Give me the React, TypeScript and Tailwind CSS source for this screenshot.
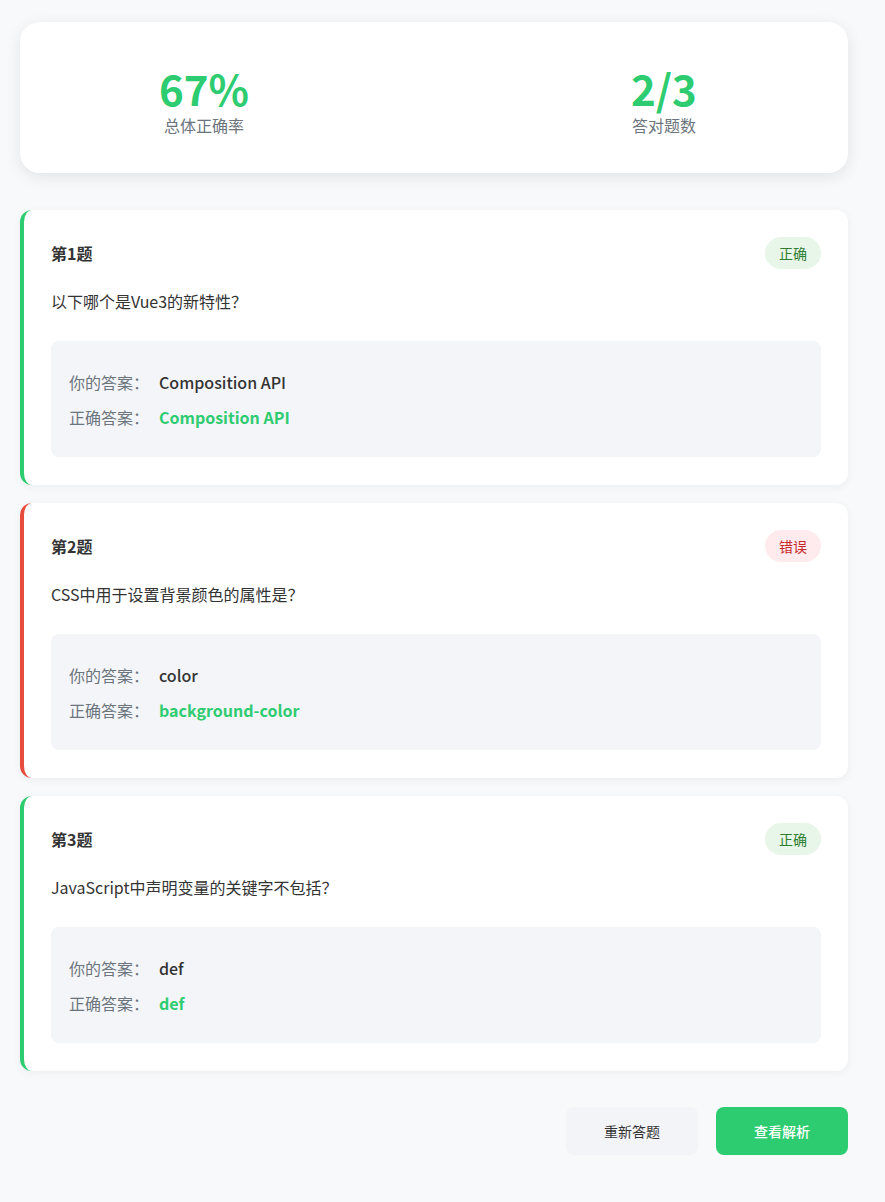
import React from "react"

type Question = {
  id: number
  text: string
  yourAnswer: string
  correctAnswer: string
  isCorrect: boolean
}

const questions: Question[] = [
  { id: 1, text: "以下哪个是Vue3的新特性？", yourAnswer: "Composition API", correctAnswer: "Composition API", isCorrect: true },
  { id: 2, text: "CSS中用于设置背景颜色的属性是？", yourAnswer: "color", correctAnswer: "background-color", isCorrect: false },
  { id: 3, text: "JavaScript中声明变量的关键字不包括？", yourAnswer: "def", correctAnswer: "def", isCorrect: true },
]

const QuestionCard = ({ q }: { q: Question }) => {
  return (
    <div
      className={
        "rounded-xl bg-white border-l-4 pt-[27px] pb-[28px] pl-[27px] pr-[27px] shadow-[0_2px_10px_rgba(0,0,0,0.05)] " +
        (q.isCorrect ? "border-[#2ecc71]" : "border-[#e74c3c]")
      }
    >
      <div className="flex items-center justify-between">
        <span className="text-base font-bold text-[#333]">第{q.id}题</span>
        {q.isCorrect ? (
          <span className="h-8 px-[14px] flex items-center rounded-full bg-[#e8f5e9] text-sm text-[#2e7d32]">正确</span>
        ) : (
          <span className="h-8 px-[14px] flex items-center rounded-full bg-[#ffebee] text-sm text-[#c62828]">错误</span>
        )}
      </div>
      <p className="mt-5 text-base leading-6 text-[#333]">{q.text}</p>
      <div className="mt-7 rounded-lg bg-[#f4f5f9] px-[18px] pt-[29px] pb-[28px] flex flex-col gap-[11px]">
        <div className="flex items-center leading-6 text-base">
          <span className="w-[90px] text-[#6c757d]">你的答案：</span>
          <span className="font-medium text-[#333]">{q.yourAnswer}</span>
        </div>
        <div className="flex items-center leading-6 text-base">
          <span className="w-[90px] text-[#6c757d]">正确答案：</span>
          <span className="font-bold text-[#2ecc71]">{q.correctAnswer}</span>
        </div>
      </div>
    </div>
  )
}

const App = () => {
  return (
    <div
      className="min-h-[1202px] bg-[#f8f9fa] pt-[22px] pl-5 pb-[46px]"
      style={{ fontFamily: '"Noto Sans CJK SC", "Noto Sans", sans-serif' }}
    >
      <div className="w-[828px]">
        <div className="h-[151px] rounded-[20px] bg-white shadow-[0_4px_16px_rgba(0,0,0,0.09)] flex items-center justify-between px-[84px]">
          <div className="w-[200px] pt-1 flex flex-col items-center">
            <span className="text-[42px] leading-[50px] font-bold text-[#2ecc71]">67%</span>
            <span className="text-base leading-6 text-[#6c757d]">总体正确率</span>
          </div>
          <div className="w-[200px] pt-1 flex flex-col items-center">
            <span className="text-[42px] leading-[50px] font-bold text-[#2ecc71]">2/3</span>
            <span className="text-base leading-6 text-[#6c757d]">答对题数</span>
          </div>
        </div>

        <div className="mt-[37px] flex flex-col gap-[18px]">
          {questions.map((q) => (
            <QuestionCard key={q.id} q={q} />
          ))}
        </div>

        <div className="mt-9 flex justify-end gap-[18px]">
          <button type="button" className="w-[132px] h-12 rounded-lg bg-[#f3f4f8] text-sm text-[#333]">
            重新答题
          </button>
          <button type="button" className="w-[132px] h-12 rounded-lg bg-[#2ecc71] text-sm font-medium text-white">
            查看解析
          </button>
        </div>
      </div>
    </div>
  )
}

export default App
